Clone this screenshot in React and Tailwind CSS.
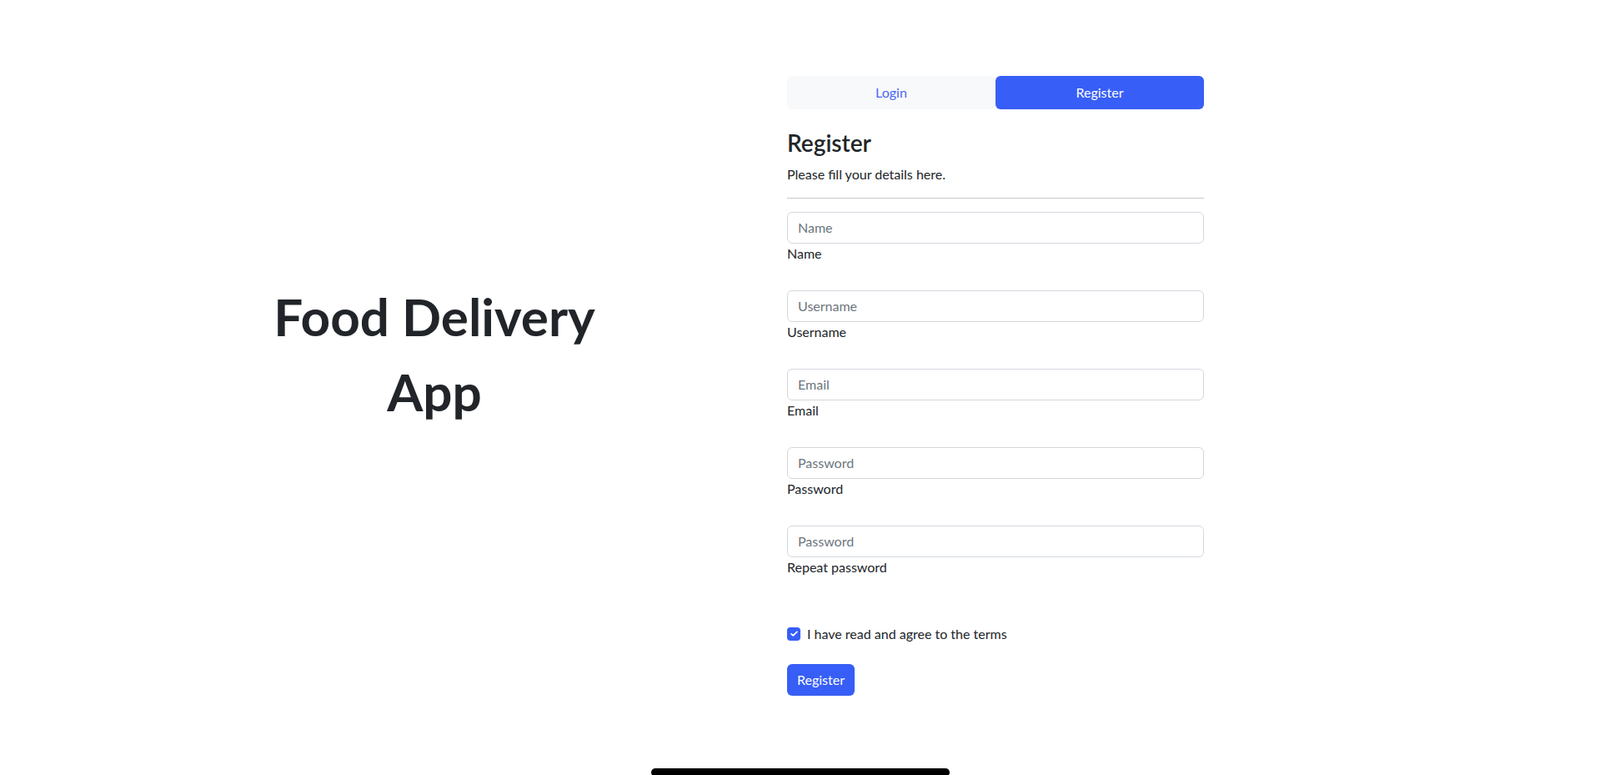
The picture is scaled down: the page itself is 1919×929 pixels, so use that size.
import React from 'react';

const fields = [
    { id: 'name', placeholder: 'Name', label: 'Name', type: 'text' },
    { id: 'username', placeholder: 'Username', label: 'Username', type: 'text' },
    { id: 'email', placeholder: 'Email', label: 'Email', type: 'email' },
    { id: 'password', placeholder: 'Password', label: 'Password', type: 'password' },
    { id: 'repeat', placeholder: 'Password', label: 'Repeat password', type: 'password' },
];

const App = () => {
    return (
        <div className="relative min-h-screen bg-white font-['Lato',sans-serif] text-[#212529] text-[16px] leading-[1.5]">
            <div className="flex pt-[91px]">
                {/* Left title */}
                <div className="ml-[281px] w-[480px] mt-[243px] text-center">
                    <h1 className="text-[62px] font-bold leading-[90px]">Food Delivery App</h1>
                </div>

                {/* Register form */}
                <div className="ml-[183px] w-[500px]">
                    <div className="flex h-[40px]">
                        <button className="w-1/2 rounded-[6px] bg-[#f8f9fa] text-[#4a68f7]">Login</button>
                        <button className="w-1/2 rounded-[6px] bg-[#375ef6] text-white">Register</button>
                    </div>

                    <h3 className="mt-[24px] mb-2 text-[28px] font-semibold leading-[1.2]">Register</h3>
                    <p>Please fill your details here.</p>
                    <hr className="my-4 border-t border-[#c8c9ca]" />

                    {fields.map((f, i) => (
                        <div key={f.id} className={i === fields.length - 1 ? 'mb-[56px]' : 'mb-8'}>
                            <input
                                id={f.id}
                                type={f.type}
                                placeholder={f.placeholder}
                                className="block w-full h-[38px] px-3 rounded-[6px] border border-[#d3d8de] bg-white placeholder:text-[#6c757d] focus:outline-none"
                            />
                            <label htmlFor={f.id} className="block">{f.label}</label>
                        </div>
                    ))}

                    {/* Terms checkbox */}
                    <div className="flex items-center h-[24px]">
                        <span className="flex items-center justify-center w-4 h-4 rounded-[4px] bg-[#375ef6]">
                            <svg viewBox="0 0 16 16" className="w-[11px] h-[11px]" fill="none" stroke="white" strokeWidth="2.6" strokeLinecap="round" strokeLinejoin="round">
                                <path d="M3 8.5l3.2 3L13 5" />
                            </svg>
                        </span>
                        <span className="ml-2">I have read and agree to the terms</span>
                    </div>

                    <button className="mt-6 h-[38px] px-3 rounded-[6px] bg-[#375ef6] text-white">Register</button>
                </div>
            </div>

            {/* Home indicator */}
            <div className="absolute left-1/2 -translate-x-1/2 top-[921px] w-[358px] h-[10px] rounded-full bg-black" />
        </div>
    );
};

export default App;
